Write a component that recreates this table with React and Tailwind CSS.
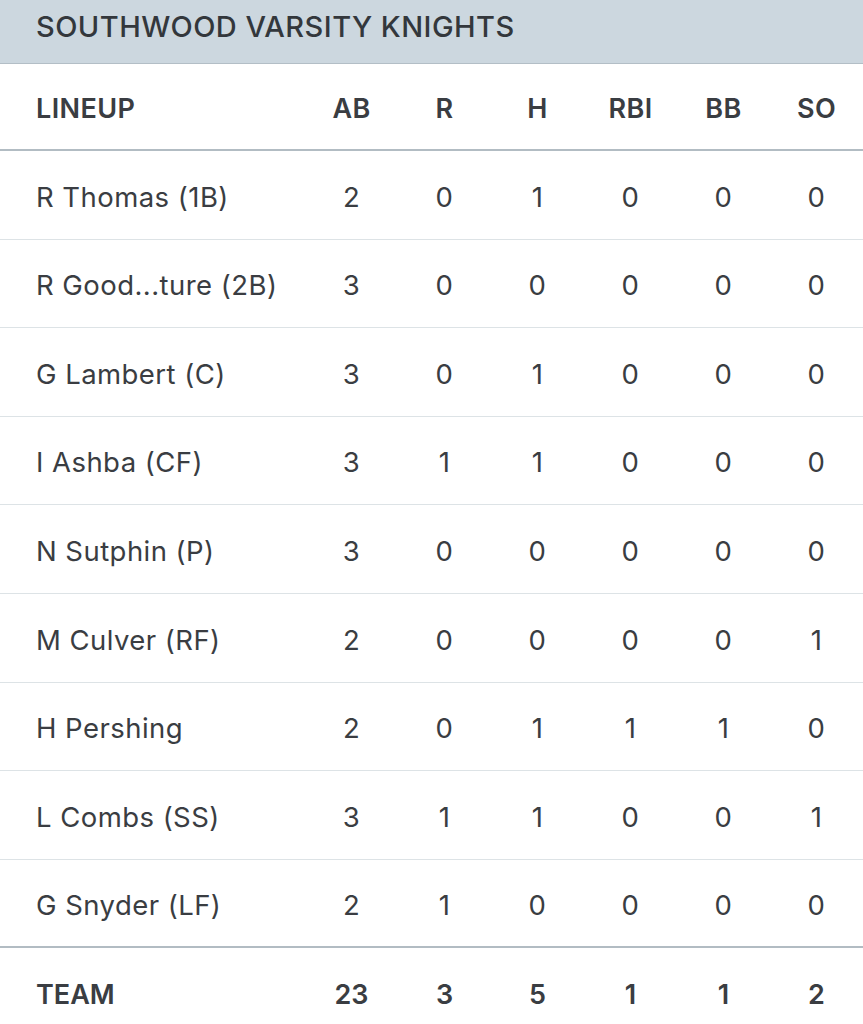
const ROWS = [
  ['R Thomas (1B)', 2, 0, 1, 0, 0, 0],
  ['R Good...ture (2B)', 3, 0, 0, 0, 0, 0],
  ['G Lambert (C)', 3, 0, 1, 0, 0, 0],
  ['I Ashba (CF)', 3, 1, 1, 0, 0, 0],
  ['N Sutphin (P)', 3, 0, 0, 0, 0, 0],
  ['M Culver (RF)', 2, 0, 0, 0, 0, 1],
  ['H Pershing', 2, 0, 1, 1, 1, 0],
  ['L Combs (SS)', 3, 1, 1, 0, 0, 1],
  ['G Snyder (LF)', 2, 1, 0, 0, 0, 0],
];

const COLS = ['AB', 'R', 'H', 'RBI', 'BB', 'SO'];
const GRID = 'grid grid-cols-[305px_repeat(6,93px)] items-center';

export default function App() {
  return (
    <div className="w-[863px] h-[1024px] overflow-hidden bg-white text-[#3a3d42] font-['Inter',sans-serif]">
      {/* Team header */}
      <div className="h-[64px] bg-[#ccd7df] border-b border-[#b3bec6] flex items-center pl-[36px] pb-[9px]">
        <span className="text-[29px] font-medium tracking-[0.45px] text-[#33373c]">SOUTHWOOD VARSITY KNIGHTS</span>
      </div>

      {/* Column headers */}
      <div className={`${GRID} h-[87px] pt-[6px] border-b-2 border-[#b2bcc3] text-[27px] font-semibold tracking-[0.4px]`}>
        <div className="pl-[36px]">LINEUP</div>
        {COLS.map(c => (
          <div key={c} className="text-center">{c}</div>
        ))}
      </div>

      {/* Players */}
      {ROWS.map(([name, ...stats], i) => (
        <div
          key={name}
          className={`${GRID} h-[88.6px] pt-[5px] text-[27.5px] tracking-[0.45px] ${i === ROWS.length - 1 ? 'border-b-2 border-[#b2bcc3]' : 'border-b border-[#dde3e6]'}`}
        >
          <div className="pl-[36px]">{name}</div>
          {stats.map((s, j) => (
            <div key={j} className="text-center">{s}</div>
          ))}
        </div>
      ))}

      {/* Totals */}
      <div className={`${GRID} h-[88px] pt-[5px] text-[27px] font-semibold`}>
        <div className="pl-[36px]">TEAM</div>
        {[23, 3, 5, 1, 1, 2].map((s, j) => (
          <div key={j} className="text-center">{s}</div>
        ))}
      </div>
    </div>
  );
}
